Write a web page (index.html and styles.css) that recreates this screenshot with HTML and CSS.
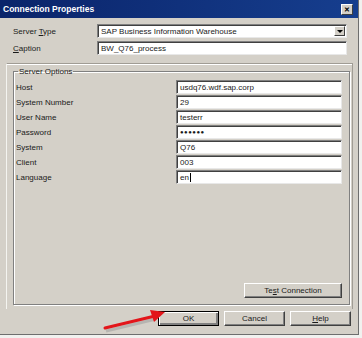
FILE: index.html
```html
<!DOCTYPE html>
<html lang="en">
<head>
    <meta charset="UTF-8">
    <meta name="viewport" content="width=device-width, initial-scale=1.0">
    <title>Connection Properties</title>
    <link rel="stylesheet" href="styles.css">
</head>
<body>

    <div class="window">
        <div class="titlebar">
            <span class="title">Connection Properties</span>
            <span class="close">&#x2715;</span>
        </div>

        <div class="top-fields">
            <div class="row">
                <label>Server <u>T</u>ype</label>
                <div class="combo">
                    <span class="combo-text">SAP Business Information Warehouse</span>
                    <span class="combo-btn"></span>
                </div>
            </div>
            <div class="row">
                <label><u>C</u>aption</label>
                <div class="field wide">BW_Q76_process</div>
            </div>
        </div>

        <div class="panel">
            <fieldset class="group">
                <legend>Server Options</legend>
                <div class="options">
                    <div class="opt"><label>Host</label><div class="field">usdq76.wdf.sap.corp</div></div>
                    <div class="opt"><label>System Number</label><div class="field">29</div></div>
                    <div class="opt"><label>User Name</label><div class="field">testerr</div></div>
                    <div class="opt"><label>Password</label><div class="field dots">&#x25CF;&#x25CF;&#x25CF;&#x25CF;&#x25CF;&#x25CF;</div></div>
                    <div class="opt"><label>System</label><div class="field">Q76</div></div>
                    <div class="opt"><label>Client</label><div class="field">003</div></div>
                    <div class="opt"><label>Language</label><div class="field">en<span class="caret"></span></div></div>
                </div>
                <div class="test-row">
                    <button class="btn test">Te<u>s</u>t Connection</button>
                </div>
            </fieldset>
        </div>

        <div class="buttons">
            <button class="btn default">OK</button>
            <button class="btn">Cancel</button>
            <button class="btn"><u>H</u>elp</button>
        </div>

        <!-- red arrow pointing at OK -->
        <svg class="arrow" width="70" height="24" viewBox="0 0 70 24">
            <line x1="2" y1="20" x2="52" y2="8" stroke="#9a9a9a" stroke-width="3" opacity="0.5" transform="translate(1,2)"/>
            <line x1="2" y1="19" x2="52" y2="7" stroke="#e3151a" stroke-width="3" stroke-linecap="round"/>
            <polygon points="62,3 47,1 51,13" fill="#e3151a"/>
        </svg>
    </div>

</body>
</html>
```

FILE: styles.css
```css
body {
    margin: 0;
    background-color: #f1f1ef;
    font-family: "Liberation Sans", Arial, sans-serif;
    font-size: 8px;
    color: #1a1a1a;
}
.window {
    position: relative;
    width: 359px;
    height: 335px;
    background-color: #d4d0c8;
    border-right: 1px solid #6e6e6e;
    border-bottom: 1px solid #6e6e6e;
    box-sizing: border-box;
}
.titlebar {
    height: 18px;
    background: linear-gradient(to right, #0a246a, #163e8e);
    display: flex;
    align-items: center;
    justify-content: space-between;
    padding: 0 5px 0 3px;
}
.title {
    color: #fff;
    font-weight: bold;
    font-size: 8.5px;
}
.close {
    width: 12px;
    height: 11px;
    background-color: #d4d0c8;
    border: 1px solid;
    border-color: #fff #404040 #404040 #fff;
    box-sizing: border-box;
    font-size: 7px;
    line-height: 9px;
    text-align: center;
    color: #000;
    font-weight: bold;
}
.top-fields {
    padding: 6px 11px 0 13px;
    display: flex;
    flex-direction: column;
    gap: 3px;
}
.row {
    display: flex;
    align-items: center;
    height: 14px;
}
.row label {
    width: 84px;
}
.combo, .field {
    height: 14px;
    background-color: #fff;
    border: 1px solid;
    border-color: #808080 #e8e8e8 #e8e8e8 #808080;
    box-shadow: inset 1px 1px 0 #404040;
    box-sizing: border-box;
    display: flex;
    align-items: center;
    padding-left: 3px;
}
.combo {
    width: 250px;
    justify-content: space-between;
    padding-right: 1px;
}
.field.wide {
    width: 250px;
}
.combo-btn {
    width: 11px;
    height: 10px;
    background-color: #d4d0c8;
    border: 1px solid;
    border-color: #fff #404040 #404040 #fff;
    box-sizing: border-box;
    position: relative;
}
.combo-btn::after {
    content: "";
    position: absolute;
    left: 2px;
    top: 3px;
    border-left: 3px solid transparent;
    border-right: 3px solid transparent;
    border-top: 3px solid #000;
}
.panel {
    margin: 8px 5px 0 6px;
    height: 246px;
    border-top: 1px solid #a09c94;
    border-left: 1px solid #f4f4f0;
    border-right: 1px solid #a09c94;
    box-shadow: inset 0 1px 0 #fff;
    box-sizing: border-box;
    padding: 3px 3px 0 6px;
}
.group {
    margin: 0;
    height: 238px;
    padding: 4px 7px 6px 2px;
    border: 1px solid #808080;
    box-shadow: 1px 1px 0 #fff, inset 1px 1px 0 #fff;
    box-sizing: border-box;
    display: flex;
    flex-direction: column;
    justify-content: space-between;
}
.group legend {
    padding: 0 1px;
    margin-left: 2px;
}
.options {
    display: flex;
    flex-direction: column;
    gap: 1px;
}
.opt {
    display: flex;
    align-items: center;
    height: 14px;
}
.opt label {
    width: 160px;
}
.opt .field {
    width: 166px;
}
.dots {
    font-size: 6px;
    letter-spacing: 0.5px;
}
.caret {
    display: inline-block;
    width: 1px;
    height: 9px;
    background-color: #000;
    margin-left: 1px;
}
.test-row {
    display: flex;
    justify-content: flex-end;
}
.btn {
    font-family: "Liberation Sans", Arial, sans-serif;
    font-size: 8px;
    color: #1a1a1a;
    background-color: #d4d0c8;
    border: 1px solid;
    border-color: #fff #404040 #404040 #fff;
    box-shadow: inset -1px -1px 0 #808080;
    height: 15px;
    padding: 0;
}
.btn.test {
    width: 98px;
}
.buttons {
    display: flex;
    justify-content: flex-end;
    gap: 5px;
    padding: 2px 7px 0 0;
}
.buttons .btn {
    width: 61px;
}
.btn.default {
    border: 1px solid #000;
    box-shadow: inset 1px 1px 0 #fff, inset -2px -2px 0 #808080;
}
.arrow {
    position: absolute;
    left: 103px;
    top: 309px;
}
```
